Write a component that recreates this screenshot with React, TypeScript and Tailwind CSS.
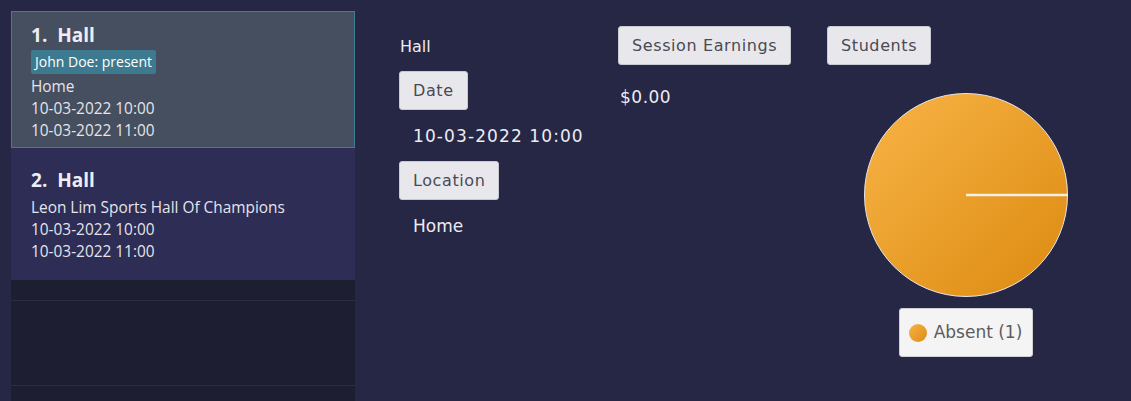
import React from "react";

type Session = {
  index: number;
  title: string;
  tags: string[];
  location: string;
  start: string;
  end: string;
  selected?: boolean;
};

const sessions: Session[] = [
  { index: 1, title: "Hall", tags: ["John Doe: present"], location: "Home", start: "10-03-2022 10:00", end: "10-03-2022 11:00", selected: true },
  { index: 2, title: "Hall", tags: [], location: "Leon Lim Sports Hall Of Champions", start: "10-03-2022 10:00", end: "10-03-2022 11:00" },
];

const listFont = { fontFamily: '"Open Sans", "Noto Sans", sans-serif' };
const detailFont = { fontFamily: '"DejaVu Sans", "Liberation Sans", sans-serif' };

function SessionCard({ s }: { s: Session }) {
  return (
    <div
      className={
        s.selected
          ? "h-[137px] border border-[#3f7f95] bg-[#464f5f] pl-[19px] pt-[10px]"
          : "h-[132px] bg-[#2d2d55] pl-[20px] pt-[19px]"
      }
    >
      <div className="text-[19px] font-bold leading-[26px] text-[#eeeef2]">
        {s.index}.&nbsp; {s.title}
      </div>
      {s.tags.length > 0 && (
        <div className="mt-[2px] flex gap-1">
          {s.tags.map((t) => (
            <span key={t} className="rounded-[2px] bg-[#3e7a8f] px-[4px] text-[14px] leading-[24px] text-white">
              {t}
            </span>
          ))}
        </div>
      )}
      <div className={s.tags.length > 0 ? "mt-[2px] text-[15.4px] leading-[22px] text-[#e4e4ea]" : "mt-[4px] text-[15.4px] leading-[22px] text-[#e4e4ea]"}>
        <div>{s.location}</div>
        <div>{s.start}</div>
        <div>{s.end}</div>
      </div>
    </div>
  );
}

function Label({ children }: { children: React.ReactNode }) {
  return (
    <div className="inline-flex h-[39px] items-center rounded-[3px] border border-[#c9c9d0] bg-[#e8e8ec] px-[13px] text-[16px] tracking-[0.6px] text-[#4a4a55]">
      {children}
    </div>
  );
}

function PieChart() {
  return (
    <svg width="206" height="206" viewBox="0 0 206 206">
      <defs>
        <linearGradient id="pie" x1="0" y1="0" x2="1" y2="1">
          <stop offset="0" stopColor="#f8b446" />
          <stop offset="1" stopColor="#dc8a10" />
        </linearGradient>
      </defs>
      <circle cx="103" cy="103" r="101.5" fill="url(#pie)" stroke="#e6e6ea" strokeWidth="1" />
      <line x1="103" y1="103" x2="204.5" y2="103" stroke="#f4f0e8" strokeWidth="2.5" />
    </svg>
  );
}

export default function App() {
  return (
    <div className="flex h-[401px] w-[1131px] overflow-hidden bg-[#262645]">
      {/* Session list */}
      <div className="pl-[11px] pt-[11px]" style={listFont}>
        <div className="flex h-[390px] w-[344px] flex-col bg-[#1e1e33]">
          {sessions.map((s) => (
            <SessionCard key={s.index} s={s} />
          ))}
          <div className="h-[21px] border-b border-[#2c2c44]" />
          <div className="h-[85px] border-b border-[#2c2c44]" />
        </div>
      </div>

      {/* Details */}
      <div className="flex pl-[44px] pt-[26px] text-[#ececf2]" style={detailFont}>
        <div className="flex w-[219px] flex-col items-start">
          <div className="mt-[11px] pl-[1px] text-[16px] leading-[20px]">Hall</div>
          <div className="mt-[14px]">
            <Label>Date</Label>
          </div>
          <div className="mt-[14px] pl-[14px] text-[17px] leading-[24px] tracking-[1.1px]">10-03-2022 10:00</div>
          <div className="mt-[13px]">
            <Label>Location</Label>
          </div>
          <div className="mt-[14px] pl-[14px] text-[17px] leading-[24px]">Home</div>
        </div>

        <div className="flex w-[209px] flex-col items-start">
          <Label>Session Earnings</Label>
          <div className="mt-[20px] pl-[2px] text-[17px] leading-[24px] tracking-[0.5px]">$0.00</div>
        </div>

        <div className="flex flex-col items-start">
          <Label>Students</Label>
          <div className="mt-[27px] flex w-[278px] flex-col items-center">
            <PieChart />
            <div className="mt-[10px] flex h-[49px] items-center gap-[7px] rounded-[3px] border border-[#cfcfd4] bg-[#f4f4f4] pl-[9px] pr-[10px]">
              <span className="h-[18px] w-[18px] rounded-full bg-gradient-to-br from-[#f6b443] to-[#dd8c12]" />
              <span className="text-[17px] text-[#5c5c5c]">Absent (1)</span>
            </div>
          </div>
        </div>
      </div>
    </div>
  );
}
